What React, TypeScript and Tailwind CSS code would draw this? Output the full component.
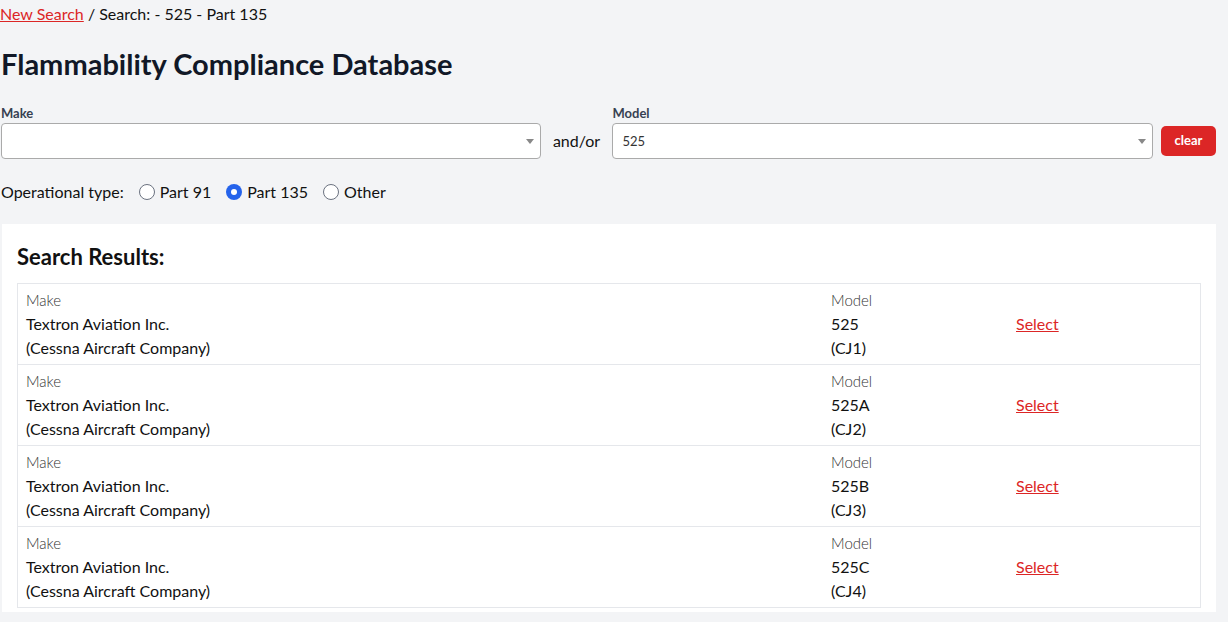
import React from "react";

const rows = [
  { model: "525", alt: "(CJ1)" },
  { model: "525A", alt: "(CJ2)" },
  { model: "525B", alt: "(CJ3)" },
  { model: "525C", alt: "(CJ4)" },
];

function Caret() {
  return (
    <svg width="8" height="5" viewBox="0 0 8 5" className="shrink-0">
      <path d="M0 0 L8 0 L4 5 Z" fill="#888" />
    </svg>
  );
}

function Radio({ checked, label }: { checked?: boolean; label: string }) {
  return (
    <label className="flex items-center gap-[5px]">
      {checked ? (
        <span className="w-[16px] h-[16px] rounded-full bg-[#2563eb] flex items-center justify-center">
          <span className="w-[6px] h-[6px] rounded-full bg-white" />
        </span>
      ) : (
        <span className="w-[16px] h-[16px] rounded-full border border-[#6b7280] bg-white" />
      )}
      <span>{label}</span>
    </label>
  );
}

export default function App() {
  return (
    <div
      className="min-h-[622px] bg-[#f3f4f6] text-[#111] pr-[12px]"
      style={{ fontFamily: "Lato, 'Open Sans', sans-serif" }}
    >
      <div className="text-[16px] leading-[20px] pt-[4px]">
        <a className="text-[#dc2626] underline">New Search</a>
        <span> / Search: - 525 - Part 135</span>
      </div>
      <h1 className="text-[29px] font-bold leading-[36px] mt-[22px] pl-[1px] text-[#111827]">
        Flammability Compliance Database
      </h1>
      <div className="flex items-end mt-[23px] pl-[1px]">
        <div className="w-[540px]">
          <div className="text-[13px] font-bold text-[#374151] leading-[16px] mb-[2px]">Make</div>
          <div className="h-[36px] bg-white border border-[#aaa] rounded-[4px] flex items-center justify-end pr-[6px]">
            <Caret />
          </div>
        </div>
        <div className="w-[72px] h-[36px] flex items-center justify-center text-[16px]">and/or</div>
        <div className="w-[541px]">
          <div className="text-[13px] font-bold text-[#374151] leading-[16px] mb-[2px]">Model</div>
          <div className="h-[36px] bg-white border border-[#aaa] rounded-[4px] flex items-center justify-between pl-[9px] pr-[6px] text-[13px] text-[#333]">
            <span className="mt-[2px]">525</span>
            <Caret />
          </div>
        </div>
        <button className="ml-[8px] mb-[3px] h-[30px] w-[55px] rounded-[5px] bg-[#dc2626] text-white text-[13px] font-bold">
          clear
        </button>
      </div>
      <div className="flex items-center gap-[15px] mt-[21px] text-[16px] pl-[1px]">
        <span>Operational type:</span>
        <Radio label="Part 91" />
        <Radio checked label="Part 135" />
        <Radio label="Other" />
      </div>
      <div className="mt-[20px] ml-[2px] bg-white px-[15px] pt-[19px] pb-[4px]">
        <h2 className="text-[22px] font-bold leading-[28px] text-[#111] mb-[12px]">Search Results:</h2>
        <div className="border border-[#e5e7eb]">
          {rows.map((r, i) => (
            <div
              key={r.model}
              className={`grid grid-cols-[805px_185px_1fr] px-[8px] pt-[4px] pb-[4px] text-[16px] leading-[24px] ${i > 0 ? "border-t border-[#e5e7eb]" : ""}`}
            >
              <div>
                <div className="font-light text-[#333] text-[15px]">Make</div>
                <div>Textron Aviation Inc.</div>
                <div>(Cessna Aircraft Company)</div>
              </div>
              <div>
                <div className="font-light text-[#333] text-[15px]">Model</div>
                <div>{r.model}</div>
                <div>{r.alt}</div>
              </div>
              <div className="flex items-center">
                <a className="text-[#dc2626] underline">Select</a>
              </div>
            </div>
          ))}
        </div>
      </div>
    </div>
  );
}
